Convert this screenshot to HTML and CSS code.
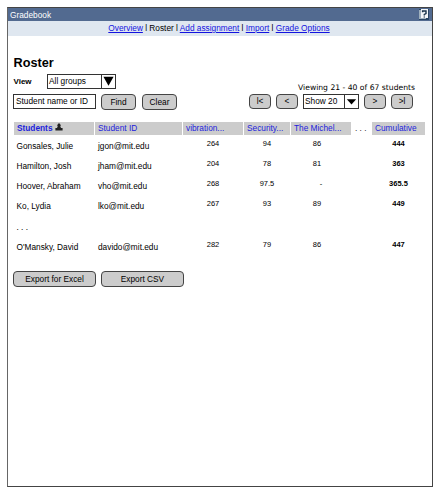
FILE: index.html
```html
<!DOCTYPE html>
<html lang="en">
<head>
<meta charset="utf-8">
<title>Gradebook</title>
<link rel="stylesheet" href="styles.css">
</head>
<body>
<div class="window">
  <header class="titlebar">
    <span>Gradebook</span>
    <svg class="help" viewBox="0 0 10 11"><rect width="10" height="11" fill="#294663"/><path d="M0 1h3v2H2v5h5v2H0z" fill="#9fb0bd"/><path d="M2 0h7v9H2z" fill="#f4f7f8"/><path d="M3.6 3.2V2h3.4v2.6L5.3 5.5V6.6M5.3 7.4v1.2" fill="none" stroke="#183349" stroke-width="1.4"/></svg>
  </header>
  <nav class="nav"><a href="#">Overview</a> l Roster l <a href="#">Add assignment</a> l <a href="#">Import</a> l <a href="#">Grade Options</a></nav>
  <main class="content">
    <h1>Roster</h1>
    <div class="view">
      <b>View</b>
      <div class="select groups"><span>All groups</span><i><svg viewBox="0 0 14 13"><path d="M1.5 1.5h11L7 11z"/></svg></i></div>
    </div>
    <div class="tools">
      <div class="input">Student name or ID</div>
      <button class="find">Find</button>
      <button class="clear">Clear</button>
      <div class="paging">
        <div class="count">Viewing 21 - 40 of 67 students</div>
        <div class="pager">
          <button>l&lt;</button><button>&lt;</button>
          <div class="select show"><span>Show 20</span><i><svg viewBox="0 0 14 13"><path d="M2 4h10L7 9.8z"/></svg></i></div>
          <button>&gt;</button><button>&gt;l</button>
        </div>
      </div>
    </div>
    <div class="row head">
      <div><b>Students</b> <svg class="sort" viewBox="0 0 8 8"><path d="M4 0l2 2.2L5.2 3 6 5h1.6v2.4H.4V5H2l.8-2L2 2.2z"/></svg></div><div>Student ID</div><div>vibration...</div><div>Security...</div><div>The Michel...</div><div class="gap">. . .</div><div>Cumulative</div>
    </div>
    <div class="row"><div>Gonsales, Julie</div><div>jgon@mit.edu</div><div class="n">264</div><div class="n">94</div><div class="n third">86</div><div></div><div class="n total">444</div></div>
    <div class="row"><div>Hamilton, Josh</div><div>jham@mit.edu</div><div class="n">204</div><div class="n">78</div><div class="n third">81</div><div></div><div class="n total">363</div></div>
    <div class="row"><div>Hoover, Abraham</div><div>vho@mit.edu</div><div class="n">268</div><div class="n">97.5</div><div class="n">-</div><div></div><div class="n total">365.5</div></div>
    <div class="row"><div>Ko, Lydia</div><div>lko@mit.edu</div><div class="n">267</div><div class="n">93</div><div class="n third">89</div><div></div><div class="n total">449</div></div>
    <div class="row"><div>. . .</div></div>
    <div class="row"><div>O'Mansky, David</div><div>davido@mit.edu</div><div class="n">282</div><div class="n">79</div><div class="n third">86</div><div></div><div class="n total">447</div></div>
    <div class="exports"><button>Export for Excel</button><button>Export CSV</button></div>
  </main>
</div>
</body>
</html>
```
FILE: styles.css
```css
* { box-sizing: border-box; }
body {
  margin: 0;
  padding: 7px 0 0 7px;
  background: #fff;
  color: #000;
  font: 8.3px/12px "Liberation Sans", Arial, sans-serif;
}
.window {
  width: 426px;
  height: 480px;
  border: 1px solid #444;
  border-left-color: #666;
}
.titlebar {
  height: 13px;
  padding: 0 3px 0 2px;
  display: flex;
  justify-content: space-between;
  align-items: center;
  background: #526a90;
  color: #fff;
}
.help { width: 10px; height: 11px; }
.nav {
  height: 15px;
  padding-right: 2px;
  line-height: 14px;
  text-align: center;
  background: #dfe7f0;
}
.nav a { color: #1414e0; }
.content { padding: 18px 7px 0 5px; }
h1 {
  margin: 0 0 0 .5px;
  font-size: 12.7px;
  line-height: 18px;
}
.view {
  display: flex;
  align-items: center;
  height: 15px;
  margin-top: 2px;
}
.view b { width: 34px; padding-left: .5px; font-size: 8px; }
.select {
  display: flex;
  border: 1px solid #333;
  background: #fff;
}
.select span { flex: 1; padding-left: 1px; white-space: nowrap; }
.select i { border-left: 1px solid #333; display: flex; }
.select svg { width: 100%; height: 100%; }
.groups { width: 69px; height: 15px; line-height: 13px; }
.groups i { width: 14px; }
.tools {
  display: flex;
  margin-top: 5px;
  height: 16px;
}
.input {
  width: 83px;
  height: 15px;
  padding-left: 2px;
  border: 1px solid #333;
  line-height: 13px;
  white-space: nowrap;
}
button {
  height: 16px;
  padding: 0;
  border: 1px solid #444;
  border-radius: 4px;
  background: #ccc;
  color: #000;
  font: inherit;
  line-height: 13px;
}
.find { width: 35px; margin-left: 5px; }
.clear { width: 35px; margin-left: 6px; }
.paging { margin: -13px 12px 0 auto; }
.count {
  height: 13px;
  margin-right: -2px;
  font: 7.65px/13px "DejaVu Sans", sans-serif;
  text-align: right;
  white-space: nowrap;
}
.pager { display: flex; gap: 5px; }
.pager button { width: 22px; height: 15px; }
.show { width: 56px; height: 15px; line-height: 13px; }
.show i { width: 14px; }
.row {
  display: grid;
  grid-template-columns: 80px 87px 60px 46px 60px 19px 53px;
  column-gap: 1px;
  height: 20.2px;
  margin-left: 1px;
  line-height: 12px;
  white-space: nowrap;
}
.row > div { padding-left: 3px; }
.row > div:first-child { padding-left: 2.5px; }
.row > .n { padding: 0; text-align: center; font-size: 7.5px; margin-top: -2px; }
.row > .third { padding-right: 8px; }
.row > .total { font-weight: bold; }
.row.head {
  height: 13px;
  margin: 12px 0 4.9px 1px;
  line-height: 13px;
  color: #1d1ddd;
}
.row.head > div { background: #ccc; }
.row.head > div:first-child { padding-left: 3px; }
.row.head > .gap { background: none; color: #333; }
.sort { width: 8px; height: 8px; fill: #222; }
.exports { display: flex; gap: 5px; margin-top: 10.4px; }
.exports button { width: 83px; }
```
